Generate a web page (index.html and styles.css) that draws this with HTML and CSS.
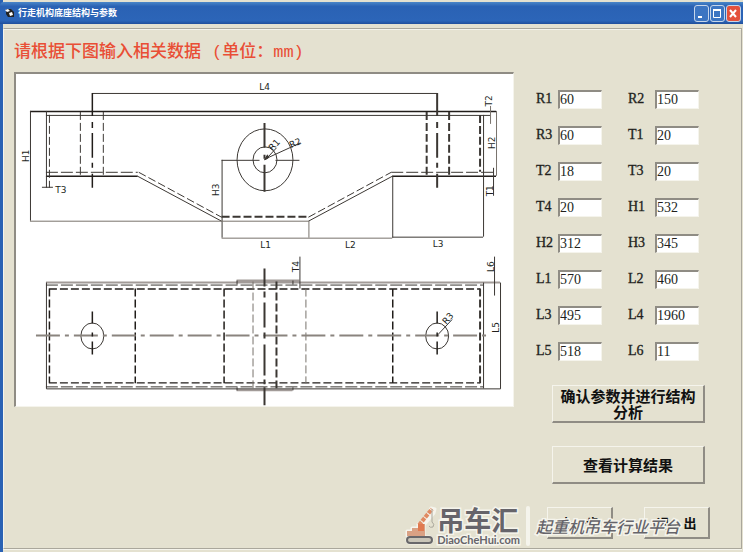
FILE: index.html
```html
<!DOCTYPE html>
<html lang="zh-CN">
<head>
    <meta charset="UTF-8">
    <meta name="viewport" content="width=device-width, initial-scale=1.0">
    <title>行走机构底座结构与参数</title>
    <link rel="stylesheet" href="styles.css">
</head>
<body>
    <div class="window">
        <header class="titlebar">
            <svg class="app-icon" viewBox="0 0 10 10" aria-hidden="true">
                <path d="M1 1h5l3 3v5H3L1 6z" fill="#222"/>
                <path d="M0 2l3-1 2 2-3 1zM4 5l3-1 1 3-3 1z" fill="#fff"/>
            </svg>
            <h1>行走机构底座结构与参数</h1>
            <div class="window-buttons">
                <button class="win-btn" aria-label="最小化"><svg viewBox="1 1 13 15"><path d="M4 12h4" stroke="#fff" stroke-width="2"/></svg></button>
                <button class="win-btn" aria-label="最大化"><svg viewBox="1 1 13 15"><path d="M3.500 4.500h7v8h-7z" fill="none" stroke="#fff"/><path d="M3 5h8" stroke="#fff" stroke-width="2"/></svg></button>
                <button class="win-btn close" aria-label="关闭"><svg viewBox="1 1 13 15"><path d="M4 5l6 7M10 5l-6 7" stroke="#fff" stroke-width="2"/></svg></button>
            </div>
        </header>

        <main class="panel">
            <h2 class="prompt"><span>请根据下图输入相关数据</span><span>(单位：mm)</span></h2>
            <div class="content">
                <div class="drawing">
                    <svg viewBox="15 74 498 333" role="img" aria-label="底座结构图">
                        <!-- front view -->
                        <g class="line">
                            <path class="bold" d="M29 111.500H496M45 176.500H137M392 176.500H496"/>
                            <path d="M45 115.500H490M91.500 93.500H437M29.500 111V221M45.500 111V188M483.500 115V237M392.500 176V238"/>
                            <path d="M137 176.500L221 221.500M308 221.500L392 176.500"/>
                            <path d="M221.500 160V238M221 160.500H259M275 160.500H299M392 237.500H483M41 187.500H52"/>
                            <path class="soft" d="M29 221.500H308M221 238.500H392M308.500 221V238M496.500 111V176M490.500 106V124"/>
                            <path d="M493.500 168V196"/>
                            <ellipse cx="264.500" cy="160" rx="28" ry="31"/>
                            <ellipse cx="264.500" cy="160" rx="12" ry="13"/>
                            <path d="M265 160L276 148M265 159L300 143"/>
                            <path d="M264 160l3-5 1 3z" class="tip"/>
                        </g>
                        <g class="line dash">
                            <path d="M48.500 115V188M79.500 112V176M102.500 112V176M138 172.500L221 217.500M308 217.500L391 172.500"/>
                            <path class="long" d="M45 172.500H137M391 172.500H494"/>
                            <path class="heavy" d="M221 217H308M426.500 112V176M449 112V176M480 115V172"/>
                        </g>
                        <path class="line bold" d="M91.500 93V116M91.500 122v6M91.500 133v25M91.500 163v5M91.500 174V188"/>
                        <path class="line heavy" d="M437 93V116M437 122v6M437 133v25M437 163v5M437 174V188M264 123V148M264 155v4M264 165V192"/>

                        <!-- top view -->
                        <g class="line">
                            <path class="pale" d="M45 283H500M236 281H299M236 391H292"/>
                            <path d="M45.500 283V389.500H500.500V283M483.500 283V389M236.500 281V285M292.500 281V285M236.500 388V391M292.500 388V391M299.500 257V289"/>
                            <path d="M494.500 257V296"/>
                            <ellipse cx="91.500" cy="336.500" rx="11.500" ry="13"/>
                            <ellipse cx="437" cy="336.500" rx="11.500" ry="13"/>
                            <path d="M437 336L452 320"/>
                        </g>
                        <g class="line dash">
                            <path class="long" d="M45 285.500H483M45 387.500H483"/>
                            <path class="bold" d="M48 289.500H480M48 383.500H480M48.500 289V384M134.500 289V384M223.500 289V384M392.500 289V384"/>
                            <path class="heavy" d="M276 282V391M480 289V384"/>
                            <path class="soft" d="M252.500 282V391M305.500 289V384"/>
                        </g>
                        <path class="line centre" d="M35 336H487"/>
                        <path class="line heavy" d="M264 269V287M264 292v6M264 303v25M264 333v6M264 345v31M264 380v5M264 388V406"/>
                        <path class="line bold" d="M91.500 312V324M91.500 333v4M91.500 342V355M437 312V324M437 333v4M437 342V355"/>

                        <g class="dims">
                            <text x="264" y="90">L4</text>
                            <text x="60" y="193">T3</text>
                            <text x="265" y="248">L1</text>
                            <text x="350" y="248">L2</text>
                            <text x="438" y="247">L3</text>
                            <text transform="translate(28 156) rotate(-90)">H1</text>
                            <text transform="translate(218 190) rotate(-90)">H3</text>
                            <text transform="translate(492 101) rotate(-90)">T2</text>
                            <text transform="translate(495 143) rotate(-90)">H2</text>
                            <text transform="translate(493 191) rotate(-90)">T1</text>
                            <text transform="translate(299 267) rotate(-90)">T4</text>
                            <text transform="translate(494 267) rotate(-90)">L6</text>
                            <text transform="translate(499 328) rotate(-90)">L5</text>
                            <text transform="translate(276 147) rotate(-48)">R1</text>
                            <text transform="translate(296 146) rotate(-24)">R2</text>
                            <text transform="translate(450 321) rotate(-48)">R3</text>
                        </g>
                    </svg>
                </div>

                <form class="params">
                    <div class="fields">
                        <label for="r1">R1</label><input id="r1" type="text" value="60">
                        <label for="r2">R2</label><input id="r2" type="text" value="150">
                        <label for="r3">R3</label><input id="r3" type="text" value="60">
                        <label for="t1">T1</label><input id="t1" type="text" value="20">
                        <label for="t2">T2</label><input id="t2" type="text" value="18">
                        <label for="t3">T3</label><input id="t3" type="text" value="20">
                        <label for="t4">T4</label><input id="t4" type="text" value="20">
                        <label for="h1">H1</label><input id="h1" type="text" value="532">
                        <label for="h2">H2</label><input id="h2" type="text" value="312">
                        <label for="h3">H3</label><input id="h3" type="text" value="345">
                        <label for="l1">L1</label><input id="l1" type="text" value="570">
                        <label for="l2">L2</label><input id="l2" type="text" value="460">
                        <label for="l3">L3</label><input id="l3" type="text" value="495">
                        <label for="l4">L4</label><input id="l4" type="text" value="1960">
                        <label for="l5">L5</label><input id="l5" type="text" value="518">
                        <label for="l6">L6</label><input id="l6" type="text" value="11">
                    </div>
                    <div class="actions">
                        <button type="button" class="btn">确认参数并进行结构分析</button>
                        <button type="button" class="btn">查看计算结果</button>
                    </div>
                    <div class="nav">
                        <button type="button" class="btn small">上一步</button>
                        <button type="button" class="btn small"><span>退</span><span>出</span></button>
                    </div>
                </form>
            </div>

            <div class="watermark">
                <svg class="crane" viewBox="0 0 30 40" aria-hidden="true">
                    <g stroke="#f5f4ec" stroke-width="3" stroke-linejoin="round" fill="#f5f4ec">
                        <path d="M1 25h5v-3h6v-4l4-1 7-10 2-5 4 1-1 4-10 12v11H1z"/>
                        <rect x="1" y="31" width="25" height="6" rx="3"/>
                    </g>
                    <path d="M1 25h5v-3h6v-4h7v12H1z" fill="#d9a184"/>
                    <path d="M13 19L26 3" stroke="#e08a62" stroke-width="4" stroke-dasharray="4 1"/>
                    <path d="M12 18h6v7h-6z" fill="#e07a50"/>
                    <path d="M26 3v13q3 2 1 5-3 1-4-1" fill="none" stroke="#aaa79c"/>
                    <rect x="1" y="31" width="25" height="6" rx="3" fill="#c9c5b8" stroke="#68676a" stroke-width="2"/>
                </svg>
                <div class="brand">
                    <span class="brand-name">吊车汇</span>
                    <span class="brand-url">DiaoCheHui.com</span>
                </div>
                <span class="bar"></span>
                <span class="slogan">起重机吊车行业平台</span>
            </div>
        </main>
    </div>
</body>
</html>
```
FILE: styles.css
```css
:root {
    --face: #e4e1d0;
    --blue: #2a62b4;
    --shadow: #8f8c84;
    --ink: #221f1c;
    --cjk: "Noto Sans CJK SC", sans-serif;
}

* {
    box-sizing: border-box;
}

body {
    margin: 0;
    background: var(--face);
    color: var(--ink);
    font-family: "Liberation Serif", var(--cjk);
}

.window {
    min-height: 100vh;
    display: flex;
    flex-direction: column;
    padding: 2px 1px 3px 0;
    border-left: 3px solid var(--blue);
}

.titlebar {
    height: 22px;
    margin-left: -3px;
    margin-right: -1px;
    padding: 0 2px 0 5px;
    display: flex;
    align-items: center;
    gap: 3px;
    background: linear-gradient(#4a86c8, #2a62b4 20%, #2c65b8 85%, #204f9c);
    border-radius: 4px 0 0 0;
}

.app-icon {
    width: 10px;
    height: 10px;
}

.titlebar h1 {
    flex: 1;
    margin: 0;
    font-family: var(--cjk);
    font-size: 9px;
    line-height: 16px;
    font-weight: 700;
    color: #fff;
}

.window-buttons {
    display: flex;
    gap: 1px;
}

.win-btn {
    width: 15px;
    height: 17px;
    padding: 0;
    border: 1px solid #c5d5ea;
    border-radius: 3px;
    background: #3c75c2;
}

.win-btn svg {
    display: block;
    width: 100%;
    height: 100%;
}

.win-btn.close {
    background: #e4513c;
}

.panel {
    position: relative;
    flex: 1;
    margin-top: 4px;
    padding: 0 8px 9px 10px;
    border: 1px solid #aaa79c;
    border-left-color: #f5f4ec;
    box-shadow: inset 0 1px #f5f4ec, 0 1px #f5f4ec;
}

.prompt {
    display: flex;
    gap: 11px;
    margin: 12px 0 7px;
    font-family: "Liberation Mono", var(--cjk);
    font-size: 17px;
    line-height: 24px;
    font-weight: 500;
    color: #e94e35;
}

.content {
    display: flex;
    align-items: flex-start;
    gap: 22px;
}

.drawing {
    flex: 1;
    background: #fff;
    border: 1px solid #f5f4ec;
    border-top: 2px solid var(--shadow);
    border-left: 2px solid var(--shadow);
}

.drawing svg {
    display: block;
    width: 100%;
}

.line {
    fill: none;
    stroke: #3b3733;
    stroke-width: 1;
}

.line .soft {
    stroke: #77716b;
}

.line .pale {
    stroke: #a29b98;
    stroke-width: 2;
}

.bold {
    stroke: #211d1a;
    stroke-width: 1.5;
}

.heavy {
    stroke: #3b3733;
    stroke-width: 2;
}

.line .tip {
    fill: #3b3733;
}

.dash {
    stroke-dasharray: 8 3;
}

.dash .long {
    stroke-dasharray: 12 3;
}

.centre {
    stroke: #8a847e;
    stroke-width: 2;
    stroke-dasharray: 24 5 4 5;
}

.dims {
    font-family: "DejaVu Sans", sans-serif;
    font-size: 9px;
    fill: var(--ink);
    text-anchor: middle;
}

.params {
    width: 197px;
    padding-top: 18px;
}

.fields {
    display: grid;
    grid-template-columns: 22px 70px 27px 44px;
    row-gap: 17px;
}

.fields label {
    font-size: 14px;
    line-height: 18px;
    -webkit-text-stroke: 0.3px var(--ink);
}

.fields input {
    width: 44px;
    height: 19px;
    padding: 0;
    border: 1px solid #f5f4ec;
    border-top: 2px solid var(--shadow);
    border-left: 2px solid var(--shadow);
    background: #fff;
    color: var(--ink);
    font-family: inherit;
    font-size: 14px;
}

.actions {
    display: flex;
    flex-direction: column;
    gap: 23px;
    margin: 24px 28px 23px 16px;
}

.btn {
    height: 38px;
    padding: 0 4px;
    border: 1px solid #f5f4ec;
    border-right: 2px solid var(--shadow);
    border-bottom: 2px solid var(--shadow);
    background: var(--face);
    color: #111;
    font-family: var(--cjk);
    font-size: 15px;
    line-height: 16px;
    font-weight: 700;
}

.nav {
    display: flex;
    justify-content: space-between;
    margin: 0 23px 0 11px;
}

.btn.small {
    width: 66px;
    height: 32px;
    display: flex;
    justify-content: center;
    align-items: center;
    gap: 14px;
    font-size: 13px;
}

/* site mark laid over the lower right corner */
.watermark {
    position: absolute;
    right: 61px;
    bottom: 2px;
    display: flex;
    align-items: center;
    gap: 4px;
    color: #66646a;
    font-family: var(--cjk);
    pointer-events: none;
}

.crane {
    width: 30px;
    height: 40px;
    margin-right: -3px;
    overflow: visible;
}

.brand {
    display: flex;
    flex-direction: column;
}

.brand-name,
.brand-url,
.slogan {
    -webkit-text-stroke: 3px #f5f4ec;
    paint-order: stroke fill;
    white-space: nowrap;
}

.brand-name {
    font-size: 27px;
    line-height: 28px;
    font-weight: 700;
}

.brand-url {
    font-family: Lato, sans-serif;
    font-size: 11px;
    line-height: 12px;
    font-weight: 700;
}

.bar {
    width: 4px;
    height: 40px;
    margin: 0 2px;
    border-radius: 2px;
    background: #f5f4ec;
}

.slogan {
    font-size: 16px;
    line-height: 20px;
    font-style: italic;
    font-weight: 500;
}
```
